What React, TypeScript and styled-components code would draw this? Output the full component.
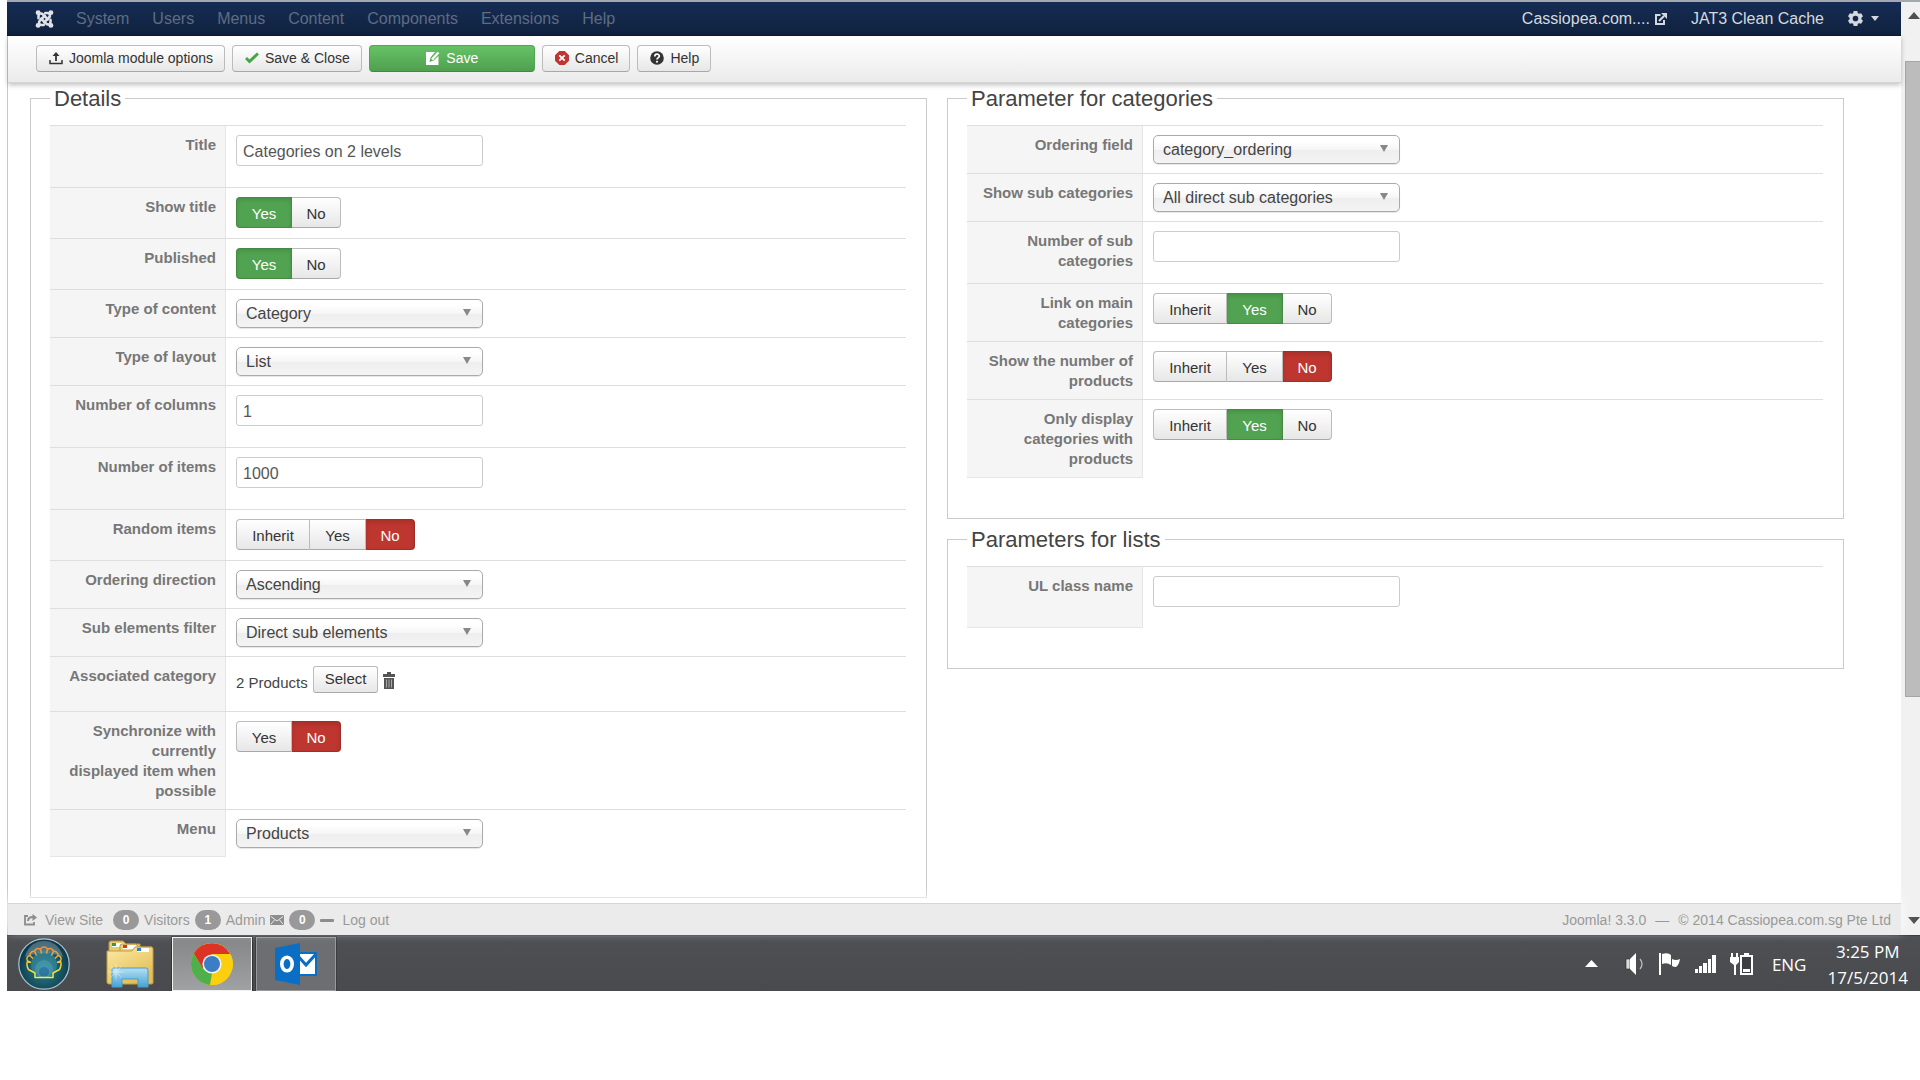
import React from 'react';
import styled, { createGlobalStyle, css } from 'styled-components';

const GlobalStyle = createGlobalStyle`
  *, *::before, *::after { box-sizing: border-box; }
  body {
    margin: 0;
    background: #fff;
    color: #444;
    font-family: "Liberation Sans", Arial, Helvetica, sans-serif;
    font-size: 15px;
    line-height: 20px;
  }
  a { color: inherit; text-decoration: none; }
  button, input, select { font-family: inherit; }
  svg { display: block; flex: none; }
`;

/* ---------- frame ---------- */

const Screen = styled.div`
  padding-left: 7px;
`;

const Browser = styled.div`
  display: flex;
  border-top: 2px solid #a3a9af;
`;

const Page = styled.div`
  flex: 1;
  min-width: 0;
  display: flex;
  flex-direction: column;
`;

const Body = styled.div`
  display: flex;
  flex-direction: column;
  border-left: 1px solid #c9c9c9;
`;

/* ---------- navigation ---------- */

const NavBar = styled.nav`
  display: flex;
  align-items: center;
  justify-content: space-between;
  height: 34px;
  padding: 0 22px 0 28px;
  background: linear-gradient(#152c54, #10223e);
  border-bottom: 1px solid #0c1a30;
  font-size: 16px;
`;

const NavGroup = styled.div<{ $gap: number }>`
  display: flex;
  align-items: center;
  gap: ${(p) => p.$gap}px;
`;

const MenuLink = styled.a`
  color: #5f6c83;
`;

const SiteLink = styled.a`
  display: flex;
  align-items: center;
  gap: 5px;
  color: #d5d9df;
`;

const GearButton = styled.button`
  display: flex;
  align-items: center;
  gap: 8px;
  padding: 0;
  border: 0;
  background: none;
  color: #d5d9df;
`;

/* ---------- toolbar ---------- */

const Toolbar = styled.div`
  position: relative;
  display: flex;
  align-items: flex-start;
  gap: 7px;
  height: 47px;
  padding: 9px 28px 0;
  background: linear-gradient(#fff, #ebebeb);
  border-bottom: 1px solid #d4d4d4;
  box-shadow: 0 2px 5px rgba(0, 0, 0, 0.25);
`;

const buttonSkin = css`
  background: linear-gradient(#fff, #e7e7e7);
  border: 1px solid #bcbcbc;
  border-bottom-color: #a8a8a8;
  color: #333;
`;

const ToolButton = styled.button<{ $primary?: boolean }>`
  display: flex;
  align-items: center;
  justify-content: center;
  gap: 6px;
  height: 27px;
  padding: 0 11px 1px 12px;
  border-radius: 4px;
  font-size: 14px;
  line-height: 20px;
  ${buttonSkin}
  ${(p) =>
    p.$primary &&
    css`
      width: 166px;
      color: #fff;
      background: linear-gradient(#66c266, #4fa04f);
      border-color: #51a651 #51a651 #3f8a3f;
    `}
`;

/* ---------- form ---------- */

const Columns = styled.main`
  display: grid;
  grid-template-columns: 1fr 1fr;
  align-items: start;
  gap: 20px;
  padding: 0 57px 5px 22px;
`;

const Column = styled.div`
  display: flex;
  flex-direction: column;
  gap: 5px;
  min-width: 0;
`;

const Panel = styled.fieldset`
  min-width: 0;
  margin: 0;
  padding: 0 20px 40px 19px;
  border: 1px solid #cbcbcb;
`;

const PanelTitle = styled.legend`
  padding: 2px 4px 0;
  font-size: 22px;
  line-height: 28px;
  color: #444;
`;

const Rows = styled.div`
  margin-top: 12px;
`;

const Row = styled.div<{ $min: number }>`
  display: grid;
  grid-template-columns: 176px 1fr;
  min-height: ${(p) => p.$min}px;
  border-top: 1px solid #dedede;
`;

const LabelCell = styled.div`
  padding: 9px 9px 8px 14px;
  background: #f5f5f5;
  border-right: 1px solid #e6e6e6;
  color: #777;
  font-weight: bold;
  text-align: right;
  white-space: pre-line;
  ${Row}:last-child & {
    border-bottom: 1px solid #e6e6e6;
  }
`;

const FieldCell = styled.div`
  padding: 9px 10px 0;
`;

const TextInput = styled.input`
  display: block;
  width: 247px;
  height: 31px;
  padding: 2px 6px 0;
  border: 1px solid #ccc;
  border-radius: 3px;
  background: #fff;
  color: #555;
  font-size: 16px;
`;

const SelectBox = styled.div`
  position: relative;
  width: 247px;
`;

const SelectInput = styled.select`
  display: block;
  appearance: none;
  width: 100%;
  height: 29px;
  padding: 0 28px 0 9px;
  border: 1px solid #aaa;
  border-radius: 5px;
  background: linear-gradient(#fff 20%, #f6f6f6 50%, #eee 52%, #f4f4f4 100%);
  box-shadow: 0 1px 1px rgba(0, 0, 0, 0.1);
  color: #444;
  font-size: 16px;
`;

const SelectArrow = styled.svg`
  position: absolute;
  top: 10px;
  right: 12px;
  pointer-events: none;
`;

const Segments = styled.div`
  display: flex;
`;

const Segment = styled.label`
  position: relative;
  display: block;
`;

const SegmentRadio = styled.input`
  position: absolute;
  inset: 0;
  margin: 0;
  opacity: 0;
`;

const checkedColor: Record<string, string> = {
  Inherit: '#3071a9',
  Yes: '#51a351',
  No: '#bd362f',
};

const segmentWidth: Record<string, number> = { Inherit: 74, Yes: 56, No: 49 };

const SegmentFace = styled.span<{ $option: string }>`
  display: block;
  min-width: ${(p) => segmentWidth[p.$option]}px;
  height: 31px;
  padding: 0 14px;
  font-size: 15px;
  line-height: 31px;
  text-align: center;
  ${buttonSkin}
  ${Segment}:not(:first-child) & {
    border-left-width: 0;
  }
  ${Segment}:first-child & {
    border-radius: 4px 0 0 4px;
  }
  ${Segment}:last-child & {
    border-radius: 0 4px 4px 0;
  }
  ${SegmentRadio}:checked + & {
    color: #fff;
    background: ${(p) => checkedColor[p.$option]};
    border-color: rgba(0, 0, 0, 0.15);
    box-shadow: inset 0 2px 4px rgba(0, 0, 0, 0.12);
  }
`;

const Picker = styled.div`
  display: flex;
  align-items: flex-end;
  gap: 5px;
`;

const PickButton = styled.button`
  height: 27px;
  padding: 0 11px 2px;
  border-radius: 3px;
  font-size: 15px;
  ${buttonSkin}
`;

const IconButton = styled.button`
  padding: 0 0 4px;
  border: 0;
  background: none;
  color: #555;
`;

/* ---------- status bar ---------- */

const StatusBar = styled.footer`
  position: relative;
  display: flex;
  align-items: center;
  justify-content: space-between;
  height: 32px;
  padding: 1px 10px 0 16px;
  background: #ebebeb;
  border-top: 1px solid #d6d6d6;
  box-shadow: 0 -5px 12px #fff;
  color: #999;
  font-size: 14px;
`;

const StatusGroup = styled.div`
  display: flex;
  align-items: center;
  gap: 5px;
`;

const StatusLink = styled.a`
  display: flex;
  align-items: center;
  gap: 8px;
  margin-right: 5px;
`;

const Badge = styled.span`
  min-width: 26px;
  height: 20px;
  border-radius: 10px;
  background: #999;
  color: #fff;
  font-size: 12px;
  font-weight: bold;
  text-align: center;
`;

const Copyright = styled.p`
  display: flex;
  gap: 9px;
  margin: 0;
`;

/* ---------- scrollbar ---------- */

const ScrollTrack = styled.div`
  display: flex;
  flex-direction: column;
  width: 19px;
  background: #f1f1f1;
`;

const ScrollEnd = styled.div<{ $bottom?: boolean }>`
  display: flex;
  justify-content: flex-end;
  ${(p) =>
    p.$bottom
      ? css`
          flex: 10;
          align-items: flex-end;
          padding-bottom: 11px;
        `
      : css`
          height: 59px;
          padding-top: 10px;
        `}
`;

const ScrollThumb = styled.div`
  flex: 28;
  margin-left: 4px;
  background: #bcbcbc;
  border: 1px solid #a6a6a6;
  border-right: 0;
`;

/* ---------- taskbar ---------- */

const Taskbar = styled.div`
  display: flex;
  align-items: center;
  justify-content: space-between;
  height: 56px;
  padding: 0 12px 0 4px;
  background: linear-gradient(#4e5054, #484a4e);
  border-top: 1px solid #3c3e42;
  color: #fff;
  font-family: "Open Sans", "Noto Sans", sans-serif;
  font-size: 17px;
`;

const TaskGroup = styled.div`
  display: flex;
  align-items: center;
  gap: 4px;
`;

const TaskButton = styled.button<{ $state?: 'active' | 'open' }>`
  display: flex;
  align-items: center;
  justify-content: center;
  width: ${(p) => (p.$state ? 80 : 76)}px;
  height: 54px;
  padding: 0;
  background: none;
  border: 0;
  ${(p) =>
    p.$state === 'active' &&
    css`
      background: linear-gradient(#858688, #a0a1a3);
      border: 1px solid #f2f2f2;
      outline: 1px solid #333;
    `}
  ${(p) =>
    p.$state === 'open' &&
    css`
      background: #6c6e71;
      border: 1px solid #98999b;
      outline: 1px solid #3c3d40;
    `}
`;

const StartButton = styled(TaskButton)`
  width: 66px;
  margin-right: 11px;
`;

const Tray = styled.div`
  display: flex;
  align-items: center;
  gap: 14px;
`;

const TrayArrow = styled.svg`
  margin-right: 13px;
`;

const Language = styled.span`
  margin: 0 7px 0 4px;
  padding-top: 2px;
`;

const Clock = styled.time`
  padding-top: 2px;
  text-align: center;
  line-height: 26px;
`;

/* ---------- drawings ---------- */

const JoomlaLogo = () => (
  <svg width="19" height="18" viewBox="0 0 24 24" fill="none" stroke="#dfe3e8">
    <g strokeWidth="3.4" strokeLinecap="round" strokeLinejoin="round">
      <path d="M4 11V8.500C4 4 8 4 10 6l6.500 6.500" />
      <path d="M13 4h2.500c4.500 0 4.500 4 2.500 6l-6.500 6.500" />
      <path d="M20 13v2.500c0 4.500-4 4.500-6 2.500l-6.500-6.500" />
      <path d="M11 20H8.500c-4.500 0-4.500-4-2.500-6L12.500 7.500" />
    </g>
    <g fill="#dfe3e8" stroke="none">
      <circle cx="3.500" cy="3.500" r="3.300" />
      <circle cx="20.500" cy="3.500" r="3.300" />
      <circle cx="3.500" cy="20.500" r="3.300" />
      <circle cx="20.500" cy="20.500" r="3.300" />
    </g>
  </svg>
);

const ExternalIcon = () => (
  <svg width="12" height="12" viewBox="0 0 12 12" fill="none" stroke="currentColor">
    <path d="M5.500 2H1v9h8V7" strokeWidth="2" />
    <path d="M4 8l5-5" strokeWidth="2.200" />
    <path d="M6 0h6v6z" fill="currentColor" stroke="none" />
  </svg>
);

const GearIcon = () => (
  <svg width="15" height="15" viewBox="0 0 16 16" fill="currentColor">
    <path
      fillRule="evenodd"
      d="M6 0h4l.5 2.300 1.200.7L14 2.300l2 3.400L14.300 7.300v1.400L16 10.300l-2 3.400-2.300-.7-1.200.7L10 16H6l-.5-2.300-1.200-.7-2.300.7-2-3.400 1.700-1.600V7.300L0 5.700l2-3.400 2.300.7 1.200-.7zM8 5a3 3 0 100 6 3 3 0 000-6z"
    />
  </svg>
);

const UploadIcon = () => (
  <svg width="14" height="14" viewBox="0 0 14 14" fill="none" stroke="#333">
    <path d="M1 9v3.500h12V9" strokeWidth="1.500" />
    <path d="M7 4v6" strokeWidth="1.800" />
    <path d="M3.500 5L7 1l3.500 4z" fill="#333" stroke="none" />
  </svg>
);

const CheckIcon = () => (
  <svg width="14" height="14" viewBox="0 0 14 14" fill="none" stroke="#46a546" strokeWidth="3">
    <path d="M1 7l3.500 3.500L13 2.500" />
  </svg>
);

const EditIcon = () => (
  <svg width="14" height="14" viewBox="0 0 14 14">
    <path d="M0 1h9L4.500 6.500 3.500 11l4-1.500L12.500 5v9H0z" fill="#fff" />
    <path d="M6 8.500l6.500-7" stroke="#fff" strokeWidth="2.400" />
  </svg>
);

const CancelIcon = () => (
  <svg width="14" height="14" viewBox="0 0 14 14">
    <path d="M4.300 0h5.400L14 4.300v5.400L9.700 14H4.300L0 9.700V4.300z" fill="#bd362f" />
    <path d="M4.300 4.300l5.400 5.400M9.700 4.300L4.300 9.700" stroke="#fff" strokeWidth="1.800" />
  </svg>
);

const HelpIcon = () => (
  <svg width="14" height="14" viewBox="0 0 14 14">
    <circle cx="7" cy="7" r="6.800" fill="#333" />
    <path d="M4.800 5.400c0-3 4.500-2.800 4.500-.3C9.300 6.700 7 6.700 7 8.600" fill="none" stroke="#fff" strokeWidth="1.700" />
    <rect x="6.100" y="9.800" width="1.800" height="1.800" fill="#fff" />
  </svg>
);

const TrashIcon = () => (
  <svg width="12" height="17" viewBox="0 0 12 17" fill="currentColor">
    <path d="M4 0h4v2h4v3H0V2h4zM1 6h10v11H1z" />
    <path d="M3.500 7.500v8M6 7.500v8M8.500 7.500v8" stroke="#aaa" />
  </svg>
);

const ShareIcon = () => (
  <svg width="13" height="12" viewBox="0 0 13 12" fill="none" stroke="#8d8d8d">
    <path d="M4 2H1v8.500h9V8" strokeWidth="1.800" />
    <path d="M4 7c0-3 2-4 5-4" strokeWidth="2" />
    <path d="M8.500 0L13 3.500 8.500 7z" fill="#8d8d8d" stroke="none" />
  </svg>
);

const MailIcon = () => (
  <svg width="14" height="10" viewBox="0 0 14 10">
    <rect width="14" height="10" rx="1" fill="#8d8d8d" />
    <path d="M1 1.500l6 4.500 6-4.500M1 9l3.500-4M13 9L9.500 5" fill="none" stroke="#ebebeb" />
  </svg>
);

const DashIcon = () => (
  <svg width="14" height="3" viewBox="0 0 14 3">
    <rect width="14" height="3" rx="1" fill="#8d8d8d" />
  </svg>
);

const ShellIcon = () => (
  <svg width="52" height="52" viewBox="0 0 52 52">
    <defs>
      <radialGradient id="orb" cx="50%" cy="60%" r="60%">
        <stop offset="0" stopColor="#2a7f94" />
        <stop offset="0.600" stopColor="#17525f" />
        <stop offset="1" stopColor="#0b2f45" />
      </radialGradient>
      <linearGradient id="shellEdge" x1="0" y1="0" x2="0" y2="1">
        <stop offset="0" stopColor="#f08a3c" />
        <stop offset="0.550" stopColor="#f2c83c" />
        <stop offset="1" stopColor="#f6ee4a" />
      </linearGradient>
    </defs>
    <circle cx="26" cy="26" r="25.200" fill="url(#orb)" stroke="#a9c9d6" strokeWidth="1.200" />
    <path d="M7 19C10 7 18 3 26 3s16 4 19 16c-10-5-28-5-38 0z" fill="#fff" opacity=".25" />
    <g fill="#3d93a8" opacity=".55">
      <circle cx="26" cy="27" r="13" />
      <circle cx="26" cy="31" r="9" fill="#5cb0c4" />
      <circle cx="26" cy="34" r="5" fill="#3679b8" />
    </g>
    <path
      d="M17 39.500V35L10.500 31.500Q8 27 9.500 23a3.500 3.500 0 012.500-5.500a3.600 3.600 0 014.500-4a3.600 3.600 0 016-2a3.700 3.700 0 017 0a3.600 3.600 0 016 2a3.600 3.600 0 014.500 4a3.500 3.500 0 012.500 5.500Q44 27 41.500 31.500L35 35v4.500zM9.500 23l3.500 1.500M12 17.500l3 3M16.500 13.500l2 4M22.500 11.500l1 4M29.500 11.500l-1 4M35.500 13.500l-2 4M40 17.500l-3 3M42.500 23L39 24.500"
      fill="none"
      stroke="url(#shellEdge)"
      strokeWidth="1.500"
      strokeLinejoin="round"
    />
  </svg>
);

const FolderIcon = () => (
  <svg width="48" height="48" viewBox="0 0 48 48">
    <defs>
      <linearGradient id="folderFront" x1="0" y1="0" x2="0.600" y2="1">
        <stop offset="0" stopColor="#fbeaa4" />
        <stop offset="1" stopColor="#e3bd55" />
      </linearGradient>
      <linearGradient id="folderStand" x1="0" y1="0" x2="0" y2="1">
        <stop offset="0" stopColor="#b5e0f2" />
        <stop offset="1" stopColor="#45a3d8" />
      </linearGradient>
    </defs>
    <path d="M3 12V3q0-2 2-2h12l3 3h14v12z" fill="#e9cb70" stroke="#b8964a" />
    <rect x="6" y="3" width="13" height="4" fill="#fff" />
    <rect x="6" y="3" width="4" height="3" fill="#3c9a3c" />
    <path d="M14 14V6q0-2 2-2h14l3 3h13v12z" fill="#edd17c" stroke="#b8964a" />
    <rect x="17" y="5" width="13" height="4" fill="#fff" />
    <rect x="17" y="5" width="4" height="3" fill="#cf3a2a" />
    <path d="M1 11h25l3-4h16q2 0 2 2v34q0 1-2 1H3q-2 0-2-2z" fill="url(#folderFront)" stroke="#c39c43" />
    <rect x="31" y="8" width="12" height="4" fill="#fff" />
    <rect x="31" y="8" width="4" height="3" fill="#2b7fd0" />
    <path d="M6 47V30q0-2 2-2h32q2 0 2 2v17H32v-8H16v8z" fill="url(#folderStand)" stroke="#4a9cc8" />
    <path d="M10 22l1 8 6-5-5 6 8 1-8 1 5 6-6-5-1 8-1-8-6 5 5-6-8-1 8-1-5-6 6 5z" fill="#fff" opacity=".4" />
  </svg>
);

const ChromeIcon = () => (
  <svg width="44" height="44" viewBox="0 0 44 44">
    <circle cx="22" cy="22" r="21" fill="#fccf0e" />
    <path d="M22 12h18.200A21 21 0 003.800 11.500L13 27z" fill="#dd3226" />
    <path d="M3.800 11.500L13.300 27 22 31l-2 11.900A21 21 0 013.800 11.500z" fill="#4fb04a" />
    <path d="M30.700 27L20 42.900A21 21 0 0040.200 12H22z" fill="#fccf0e" />
    <circle cx="22" cy="22" r="9.600" fill="#f5f5f5" />
    <circle cx="22" cy="22" r="8" fill="#3b7ec6" />
  </svg>
);

const OutlookIcon = () => (
  <svg width="42" height="42" viewBox="0 0 42 42">
    <rect x="22" y="10" width="19" height="22" fill="#fff" stroke="#0a6fc4" strokeWidth="2" />
    <path d="M22 12l9 10 10-11" fill="none" stroke="#0a6fc4" strokeWidth="3" />
    <path d="M0 5l25-5v42L0 37z" fill="#0a6fc4" />
    <ellipse cx="12" cy="21" rx="5.200" ry="6.800" fill="none" stroke="#fff" strokeWidth="3.600" />
  </svg>
);

const Triangle = ({ up }: { up?: boolean }) => (
  <svg width="12" height="7" viewBox="0 0 12 7" fill="#505050">
    <path d={up ? 'M0 7l6-7 6 7z' : 'M0 0h12L6 7z'} />
  </svg>
);

const SpeakerIcon = () => (
  <svg width="20" height="24" viewBox="0 0 20 24">
    <path d="M1 7h4v10H1z" fill="#ddd" stroke="#222" strokeWidth=".6" />
    <path d="M5 7l6-6v22l-6-6z" fill="#fff" />
    <path d="M15 7q4 5 0 10" fill="none" stroke="#bbb" strokeWidth="1.300" />
  </svg>
);

const FlagIcon = () => (
  <svg width="22" height="24" viewBox="0 0 22 24" fill="#fff">
    <path d="M0 1h2v22H0zM3 2q6-2 9 1v10q-4-3-9-1zM13 7q4 2 8 0-1 6-4 8-2 0-4-1z" />
  </svg>
);

const SignalIcon = () => (
  <svg width="21" height="18" viewBox="0 0 21 18" fill="#fff">
    <path d="M0 14h3v4H0zM4 11h3v7H4zM8 8h4v10H8zM13 4h3v14h-3zM17 0h4v18h-4z" />
  </svg>
);

const BatteryIcon = () => (
  <svg width="24" height="24" viewBox="0 0 24 24">
    <path d="M1 1h2v4h3V1h2v4h1v5L6 13v10H4V13L0 10V5h1z" fill="#fff" />
    <path d="M14 1h5v2h4v20H10V3h4z" fill="#fff" />
    <path d="M12 5h9v16h-9z" fill="#3c3e42" />
    <path d="M13 17h7v3h-7z" fill="#fff" />
  </svg>
);

/* ---------- data ---------- */

type Field =
  | { kind: 'text'; label: string; value: string }
  | { kind: 'select'; label: string; value: string }
  | { kind: 'radio'; label: string; options: string[]; value: string }
  | { kind: 'picker'; label: string; value: string };

const yesNo = ['Yes', 'No'];
const inheritYesNo = ['Inherit', 'Yes', 'No'];

const details: Field[] = [
  { kind: 'text', label: 'Title', value: 'Categories on 2 levels' },
  { kind: 'radio', label: 'Show title', options: yesNo, value: 'Yes' },
  { kind: 'radio', label: 'Published', options: yesNo, value: 'Yes' },
  { kind: 'select', label: 'Type of content', value: 'Category' },
  { kind: 'select', label: 'Type of layout', value: 'List' },
  { kind: 'text', label: 'Number of columns', value: '1' },
  { kind: 'text', label: 'Number of items', value: '1000' },
  { kind: 'radio', label: 'Random items', options: inheritYesNo, value: 'No' },
  { kind: 'select', label: 'Ordering direction', value: 'Ascending' },
  { kind: 'select', label: 'Sub elements filter', value: 'Direct sub elements' },
  { kind: 'picker', label: 'Associated category', value: '2 Products' },
  {
    kind: 'radio',
    label: 'Synchronize with\ncurrently\ndisplayed item when\npossible',
    options: yesNo,
    value: 'No',
  },
  { kind: 'select', label: 'Menu', value: 'Products' },
];

const categoryParams: Field[] = [
  { kind: 'select', label: 'Ordering field', value: 'category_ordering' },
  { kind: 'select', label: 'Show sub categories', value: 'All direct sub categories' },
  { kind: 'text', label: 'Number of sub categories', value: '' },
  { kind: 'radio', label: 'Link on main categories', options: inheritYesNo, value: 'Yes' },
  { kind: 'radio', label: 'Show the number of products', options: inheritYesNo, value: 'No' },
  { kind: 'radio', label: 'Only display categories with products', options: inheritYesNo, value: 'Yes' },
];

const listParams: Field[] = [{ kind: 'text', label: 'UL class name', value: '' }];

const rowHeight = { text: 62, radio: 51, select: 48, picker: 55 };

/* ---------- parts ---------- */

const FieldControl = ({ field, id }: { field: Field; id: string }) => {
  switch (field.kind) {
    case 'text':
      return <TextInput id={id} type="text" defaultValue={field.value} />;
    case 'select':
      return (
        <SelectBox>
          <SelectInput id={id} defaultValue={field.value}>
            <option>{field.value}</option>
          </SelectInput>
          <SelectArrow width="8" height="7" viewBox="0 0 8 7" fill="#888">
            <path d="M0 0h8L4 7z" />
          </SelectArrow>
        </SelectBox>
      );
    case 'radio':
      return (
        <Segments role="radiogroup" aria-labelledby={`${id}-label`}>
          {field.options.map((option) => (
            <Segment key={option}>
              <SegmentRadio type="radio" name={id} value={option} defaultChecked={option === field.value} />
              <SegmentFace $option={option}>{option}</SegmentFace>
            </Segment>
          ))}
        </Segments>
      );
    case 'picker':
      return (
        <Picker>
          <span>{field.value}</span>
          <PickButton id={id} type="button">
            Select
          </PickButton>
          <IconButton type="button" aria-label="Delete">
            <TrashIcon />
          </IconButton>
        </Picker>
      );
  }
};

const FormPanel = ({ name, title, fields }: { name: string; title: string; fields: Field[] }) => (
  <Panel>
    <PanelTitle>{title}</PanelTitle>
    <Rows>
      {fields.map((field, index) => {
        const id = `${name}-${index}`;
        return (
          <Row key={id} $min={rowHeight[field.kind]}>
            <LabelCell>
              {field.kind === 'radio' ? (
                <span id={`${id}-label`}>{field.label}</span>
              ) : (
                <label htmlFor={id}>{field.label}</label>
              )}
            </LabelCell>
            <FieldCell>
              <FieldControl field={field} id={id} />
            </FieldCell>
          </Row>
        );
      })}
    </Rows>
  </Panel>
);

const menus = ['System', 'Users', 'Menus', 'Content', 'Components', 'Extensions', 'Help'];

export default function App() {
  return (
    <Screen>
      <GlobalStyle />
      <Browser>
        <Page>
          <NavBar>
            <NavGroup $gap={22}>
              <a href="#home" aria-label="Joomla">
                <JoomlaLogo />
              </a>
              <NavGroup $gap={23}>
                {menus.map((menu) => (
                  <MenuLink key={menu} href={`#${menu.toLowerCase()}`}>
                    {menu}
                  </MenuLink>
                ))}
              </NavGroup>
            </NavGroup>
            <NavGroup $gap={24}>
              <SiteLink href="#site">
                Cassiopea.com....
                <ExternalIcon />
              </SiteLink>
              <SiteLink href="#cache">JAT3 Clean Cache</SiteLink>
              <GearButton type="button" aria-label="Account">
                <GearIcon />
                <svg width="8" height="5" viewBox="0 0 8 5" fill="currentColor">
                  <path d="M0 0h8L4 5z" />
                </svg>
              </GearButton>
            </NavGroup>
          </NavBar>
          <Body>
            <Toolbar>
              <ToolButton type="button">
                <UploadIcon />
                Joomla module options
              </ToolButton>
              <ToolButton type="button">
                <CheckIcon />
                Save &amp; Close
              </ToolButton>
              <ToolButton type="button" $primary>
                <EditIcon />
                Save
              </ToolButton>
              <ToolButton type="button">
                <CancelIcon />
                Cancel
              </ToolButton>
              <ToolButton type="button">
                <HelpIcon />
                Help
              </ToolButton>
            </Toolbar>
            <Columns>
              <Column>
                <FormPanel name="details" title="Details" fields={details} />
              </Column>
              <Column>
                <FormPanel name="categories" title="Parameter for categories" fields={categoryParams} />
                <FormPanel name="lists" title="Parameters for lists" fields={listParams} />
              </Column>
            </Columns>
            <StatusBar>
              <StatusGroup>
                <StatusLink href="#view">
                  <ShareIcon />
                  View Site
                </StatusLink>
                <Badge>0</Badge>
                <span>Visitors</span>
                <Badge>1</Badge>
                <span>Admin</span>
                <MailIcon />
                <Badge>0</Badge>
                <StatusLink href="#logout">
                  <DashIcon />
                  Log out
                </StatusLink>
              </StatusGroup>
              <Copyright>
                <span>Joomla! 3.3.0</span>
                <span>—</span>
                <span>© 2014 Cassiopea.com.sg Pte Ltd</span>
              </Copyright>
            </StatusBar>
          </Body>
        </Page>
        <ScrollTrack>
          <ScrollEnd>
            <Triangle up />
          </ScrollEnd>
          <ScrollThumb />
          <ScrollEnd $bottom>
            <Triangle />
          </ScrollEnd>
        </ScrollTrack>
      </Browser>
      <Taskbar>
        <TaskGroup>
          <StartButton type="button" aria-label="Start">
            <ShellIcon />
          </StartButton>
          <TaskButton type="button" aria-label="File Explorer">
            <FolderIcon />
          </TaskButton>
          <TaskButton type="button" aria-label="Chrome" $state="active">
            <ChromeIcon />
          </TaskButton>
          <TaskButton type="button" aria-label="Outlook" $state="open">
            <OutlookIcon />
          </TaskButton>
        </TaskGroup>
        <Tray>
          <TrayArrow width="13" height="7" viewBox="0 0 13 7" fill="#fff">
            <path d="M0 7l6.500-7L13 7z" />
          </TrayArrow>
          <SpeakerIcon />
          <FlagIcon />
          <SignalIcon />
          <BatteryIcon />
          <Language>ENG</Language>
          <Clock>
            3:25 PM
            <br />
            17/5/2014
          </Clock>
        </Tray>
      </Taskbar>
    </Screen>
  );
}
